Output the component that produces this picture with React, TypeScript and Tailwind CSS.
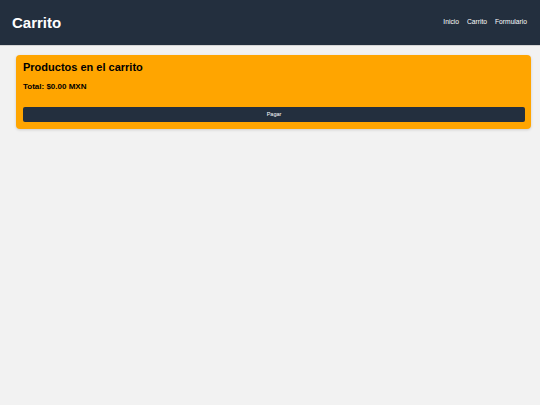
export default function App() {
  return (
    <div className="min-h-[405px] bg-[#f2f2f2]" style={{ fontFamily: '"Liberation Sans", Arial, sans-serif' }}>
      <header className="h-[46px] bg-[#232f3e] border-b border-[#d4d4d4] flex items-center justify-between pl-[12px] pr-[13px]">
        <h1 className="text-white text-[15px] font-bold leading-none">Carrito</h1>
        <nav className="flex gap-[8px] text-white text-[6.7px]">
          <a>Inicio</a>
          <a>Carrito</a>
          <a>Formulario</a>
        </nav>
      </header>
      <main className="pl-[16px] pr-[9px] pt-[9px]">
        <div className="bg-[#ffa500] rounded-[4px] shadow-[0_1px_3px_rgba(0,0,0,0.15)] pl-[7px] pr-[6px] pt-[6px] pb-[7px]">
          <h2 className="text-[11px] font-bold leading-[13px] text-black">Productos en el carrito</h2>
          <p className="mt-[8px] text-[8px] font-bold leading-[10px] text-black">Total: $0.00 MXN</p>
          <button className="mt-[15px] w-full h-[15px] bg-[#232f3e] rounded-[2px] text-white text-[5.5px] flex items-center justify-center">Pagar</button>
        </div>
      </main>
    </div>
  );
}
